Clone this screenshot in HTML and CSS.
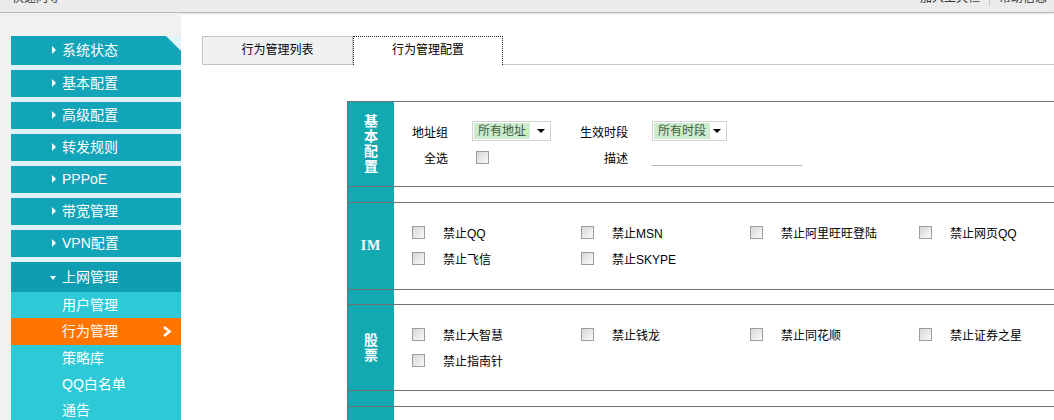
FILE: index.html
```html
<!DOCTYPE html>
<html lang="zh-CN">
<head>
    <meta charset="UTF-8">
    <title>上网管理 - 行为管理</title>
    <link rel="stylesheet" href="styles.css">
</head>
<body>

    <div class="topbar">
        <span>快速向导</span>
        <span class="links"><span>加入工具栏</span><i class="sep"></i><span>帮助信息</span></span>
    </div>

    <div class="wrap">
        <div class="side">
            <div class="menu">
                <div class="item first">系统状态</div>
                <div class="item">基本配置</div>
                <div class="item">高级配置</div>
                <div class="item">转发规则</div>
                <div class="item">PPPoE</div>
                <div class="item">带宽管理</div>
                <div class="item">VPN配置</div>
                <div class="item open">上网管理</div>
                <div class="sub">
                    <div class="sub-item">用户管理</div>
                    <div class="sub-item cur">
                        <span>行为管理</span>
                        <svg width="10" height="11" viewBox="0 0 10 11"><polyline points="2,1 7.5,5.5 2,10" fill="none" stroke="#fff" stroke-width="2.6"/></svg>
                    </div>
                    <div class="sub-item">策略库</div>
                    <div class="sub-item">QQ白名单</div>
                    <div class="sub-item">通告</div>
                </div>
            </div>
        </div>

        <div class="main">
            <div class="tabs">
                <div class="tab">行为管理列表</div>
                <div class="tab active">行为管理配置</div>
                <div class="tab-fill"></div>
            </div>

            <div class="cfg">
                <div class="sec h85">
                    <div class="sec-title"><span>基本配置</span></div>
                    <div class="sec-body form">
                        <label class="lbl">地址组</label>
                        <div class="ctl">
                            <span class="sel w79"><span class="opt">所有地址</span><i class="arr"></i></span>
                        </div>
                        <label class="lbl">生效时段</label>
                        <div class="ctl">
                            <span class="sel w75"><span class="opt">所有时段</span><i class="arr"></i></span>
                        </div>

                        <label class="lbl">全选</label>
                        <div class="ctl"><input type="checkbox" class="ck first-ck"></div>
                        <label class="lbl">描述</label>
                        <div class="ctl"><input type="text" class="desc"></div>
                    </div>
                </div>
                <div class="sec gap h16"><div class="sec-title"></div><div class="sec-body"></div></div>

                <div class="sec h87">
                    <div class="sec-title im">IM</div>
                    <div class="sec-body checks">
                        <label class="chk"><input type="checkbox" class="ck">禁止QQ</label>
                        <label class="chk"><input type="checkbox" class="ck">禁止MSN</label>
                        <label class="chk"><input type="checkbox" class="ck">禁止阿里旺旺登陆</label>
                        <label class="chk"><input type="checkbox" class="ck">禁止网页QQ</label>
                        <label class="chk"><input type="checkbox" class="ck">禁止飞信</label>
                        <label class="chk"><input type="checkbox" class="ck">禁止SKYPE</label>
                    </div>
                </div>
                <div class="sec gap h15"><div class="sec-title"></div><div class="sec-body"></div></div>

                <div class="sec h86">
                    <div class="sec-title"><span>股票</span></div>
                    <div class="sec-body checks">
                        <label class="chk"><input type="checkbox" class="ck">禁止大智慧</label>
                        <label class="chk"><input type="checkbox" class="ck">禁止钱龙</label>
                        <label class="chk"><input type="checkbox" class="ck">禁止同花顺</label>
                        <label class="chk"><input type="checkbox" class="ck">禁止证券之星</label>
                        <label class="chk"><input type="checkbox" class="ck">禁止指南针</label>
                    </div>
                </div>
                <div class="sec gap h16"><div class="sec-title"></div><div class="sec-body"></div></div>

                <div class="sec h86">
                    <div class="sec-title"><span>下载</span></div>
                    <div class="sec-body checks">
                        <label class="chk"><input type="checkbox" class="ck">禁止迅雷</label>
                        <label class="chk"><input type="checkbox" class="ck">禁止BT</label>
                    </div>
                </div>
            </div>
        </div>
    </div>

</body>
</html>
```

FILE: styles.css
```css
body {
    margin: 0;
    font-family: "Liberation Sans", "Noto Sans CJK SC", sans-serif;
    font-size: 12px;
    color: #000;
    background-color: #fff;
    overflow: hidden;
}

.topbar {
    height: 12px;
    background-color: #ebebeb;
    border-bottom: 1px solid #b7b7b7;
    box-shadow: 0 1px 2px rgba(0, 0, 0, 0.12);
    overflow: hidden;
    display: flex;
    justify-content: space-between;
    align-items: flex-start;
    padding: 0 7px 0 12px;
    color: #333;
}

.topbar > span {
    line-height: 16px;
    margin-top: -10px;
}

.links {
    display: flex;
    align-items: center;
}

.sep {
    width: 1px;
    height: 16px;
    margin: 0 9px;
    background-color: #c4c4c4;
}

.wrap {
    display: flex;
    height: 407px;
}

/* left menu */
.side {
    width: 181px;
    flex: none;
    background-color: #f1f1f1;
    padding-top: 23px;
    box-sizing: border-box;
}

.menu {
    margin-left: 11px;
    background-color: #def4f6;
}

.item {
    height: 27px;
    line-height: 27px;
    margin-bottom: 5px;
    padding-left: 41px;
    background-color: #12a4b8;
    color: #fff;
    font-size: 14px;
}

.item::before {
    content: "";
    display: inline-block;
    vertical-align: 1px;
    margin-right: 6px;
    border-left: 4px solid #fff;
    border-top: 4px solid transparent;
    border-bottom: 4px solid transparent;
}

.item.first {
    height: 29px;
    line-height: 29px;
    clip-path: polygon(0 0, calc(100% - 15px) 0, 100% 15px, 100% 100%, 0 100%);
}

.item.open {
    height: 30px;
    line-height: 30px;
    margin-bottom: 0;
    padding-left: 39px;
    background-color: #0f9db1;
}

.item.open::before {
    vertical-align: 2px;
    margin-right: 6px;
    border-top: 4px solid #fff;
    border-left: 3px solid transparent;
    border-right: 3px solid transparent;
    border-bottom: 0;
}

.sub {
    background-color: #2ec9d6;
}

.sub-item {
    height: 26px;
    line-height: 26px;
    padding-left: 51px;
    color: #fff;
    font-size: 14px;
}

.sub-item.cur {
    height: 27px;
    line-height: 27px;
    display: flex;
    align-items: center;
    justify-content: space-between;
    padding-right: 9px;
    background-color: #ff7500;
}

/* right side */
.main {
    flex: 1;
    padding: 23px 0 0 21px;
    overflow: hidden;
}

.tabs {
    display: flex;
    height: 29px;
}

.tab {
    width: 151px;
    height: 29px;
    line-height: 27px;
    box-sizing: border-box;
    text-align: center;
    background-color: #f0f0f0;
    border: 1px solid #c4c4c4;
    flex: none;
}

.tab.active {
    width: 150px;
    background-color: #fff;
    border: 1px dotted #222;
    border-bottom: none;
}

.tab-fill {
    flex: 1;
    border-bottom: 1px solid #c8c8c8;
}

.cfg {
    margin: 36px 0 0 145px;
    width: 900px;
    border-left: 1px solid #6f6f6f;
}

.sec {
    display: flex;
    box-sizing: border-box;
    border-top: 1px solid #707070;
}

.h85 { height: 85px; }
.h86 { height: 86px; }
.h87 { height: 87px; }
.h15 { height: 15px; }
.h16 { height: 16px; }

.sec-title {
    width: 46px;
    flex: none;
    display: flex;
    align-items: center;
    justify-content: center;
    background-color: #13a9b0;
    color: #fff;
    font-size: 14px;
    font-weight: bold;
}

.sec-title span {
    width: 14px;
    line-height: 15px;
    text-align: center;
}

.sec-title.im {
    font-family: "Liberation Serif", serif;
    font-size: 14px;
    letter-spacing: 1px;
}

.sec-body {
    flex: 1;
    padding: 16px 0 0 18px;
}

.gap .sec-body {
    padding: 0;
}

/* basic config form */
.form {
    padding-left: 0;
    display: grid;
    grid-template-columns: 54px 132px 48px 1fr;
    grid-auto-rows: 26px;
    align-items: center;
    align-content: start;
}

.lbl {
    text-align: right;
}

.ctl {
    padding-left: 24px;
    display: flex;
    align-items: center;
}

.sel {
    display: inline-flex;
    align-items: center;
    justify-content: space-between;
    height: 20px;
    box-sizing: border-box;
    padding: 0 5px 0 1px;
    border: 1px solid #d3d3d3;
    background-color: #fff;
}

.w79 { width: 79px; }
.w75 { width: 75px; }

.opt {
    line-height: 16px;
    padding: 0 4px;
    background-color: #cdebcd;
    color: #3e5f3e;
}

.arr {
    border-top: 4px solid #000;
    border-left: 4px solid transparent;
    border-right: 4px solid transparent;
}

.ck {
    appearance: none;
    -webkit-appearance: none;
    width: 13px;
    height: 13px;
    margin: 0 18px 0 0;
    box-sizing: border-box;
    border: 1px solid #9d9d9d;
    background: linear-gradient(135deg, #d6d6d6, #fbfbfb);
    flex: none;
}

.first-ck {
    margin-left: 4px;
}

.desc {
    width: 150px;
    height: 18px;
    box-sizing: border-box;
    border: none;
    border-bottom: 1px solid #b4b4b4;
    padding: 0;
    outline: none;
}

/* check lists */
.checks {
    display: grid;
    grid-template-columns: repeat(4, 169px);
    grid-auto-rows: 26px;
    align-items: center;
    align-content: start;
}

.chk {
    display: flex;
    align-items: center;
}
```
